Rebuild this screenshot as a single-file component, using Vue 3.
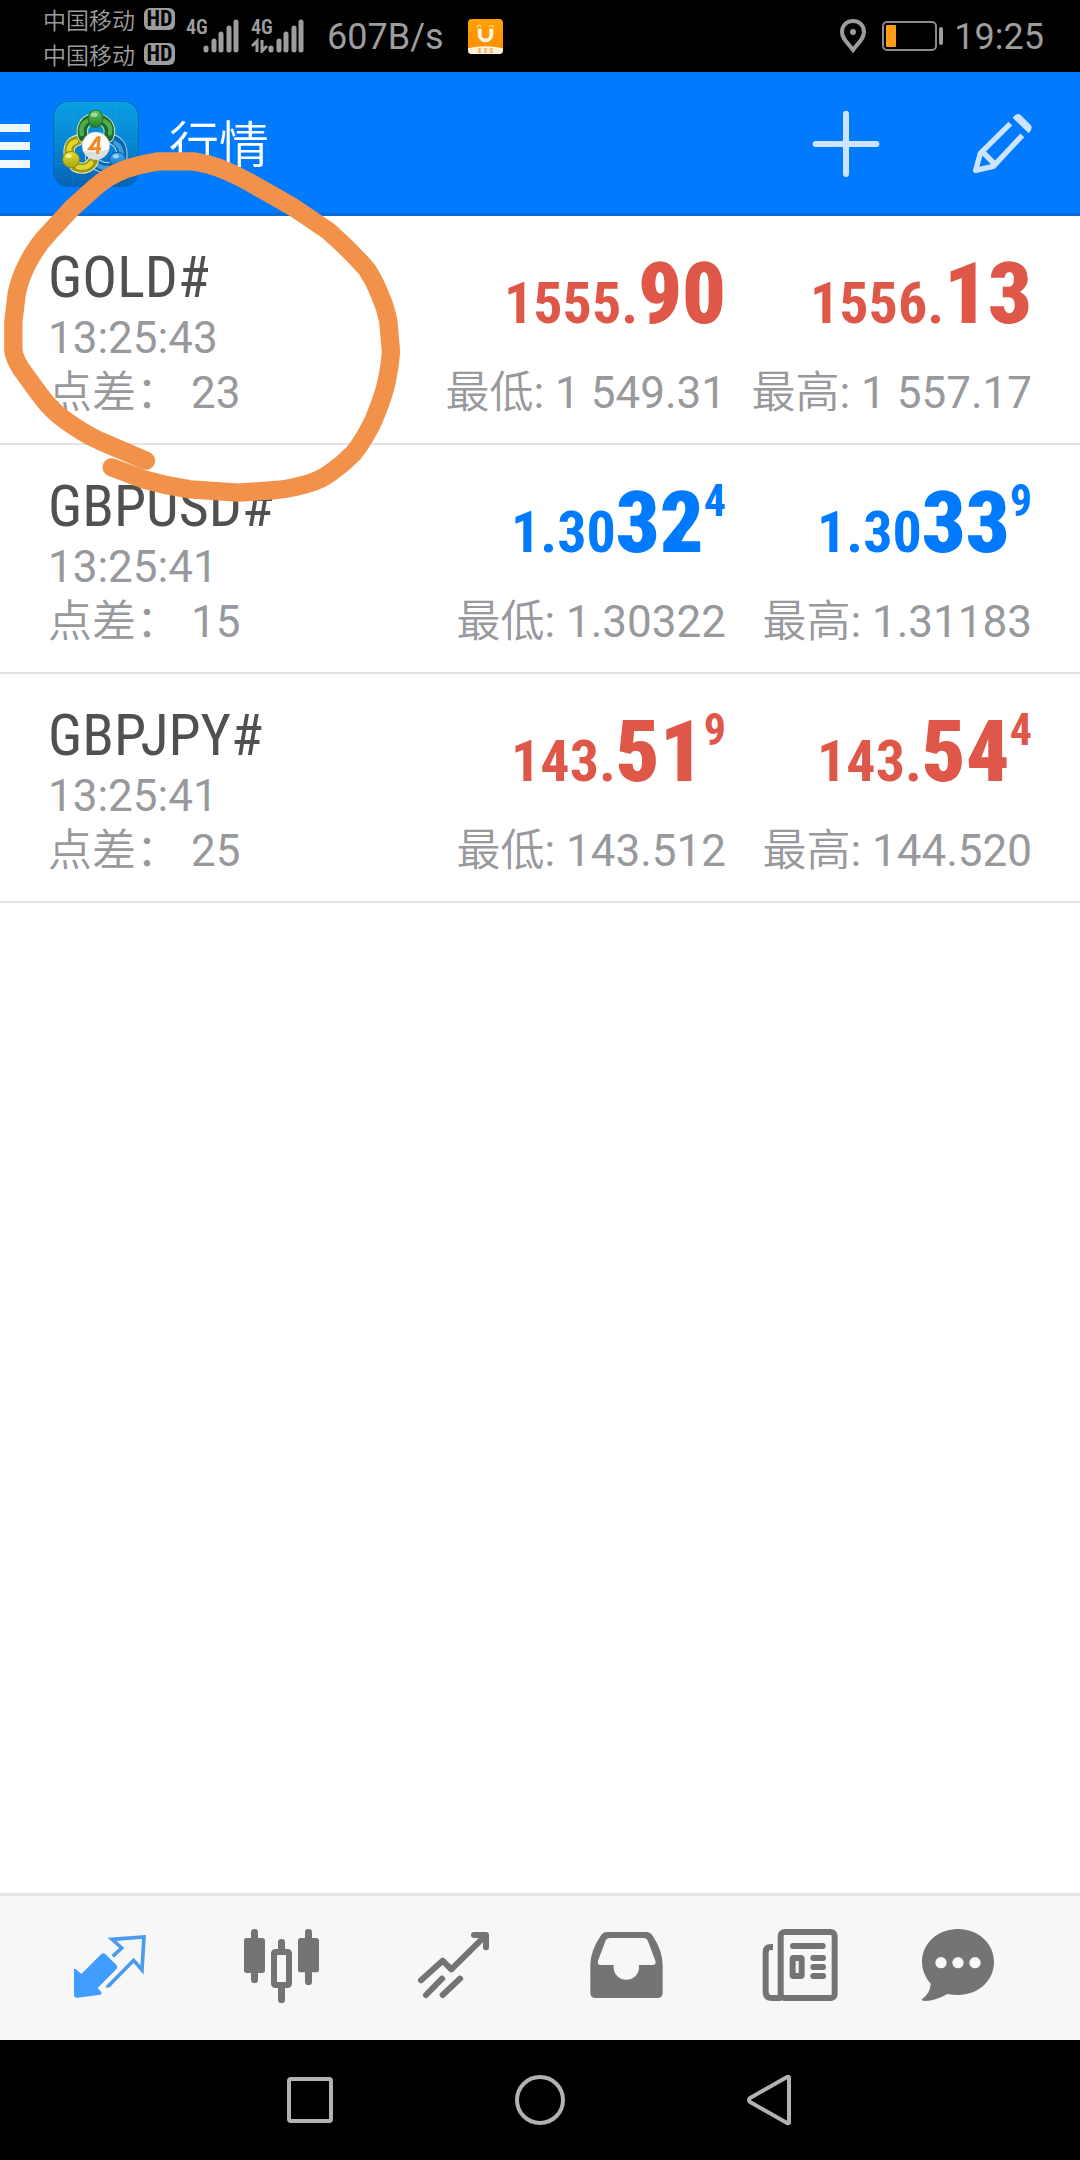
<script setup>
import { ref } from 'vue'

const quotes = [
  {
    symbol: 'GOLD#', time: '13:25:43', spread: '23', trend: 'down',
    bid: ['1555.', '90', ''], ask: ['1556.', '13', ''], low: '1 549.31', high: '1 557.17',
  },
  {
    symbol: 'GBPUSD#', time: '13:25:41', spread: '15', trend: 'up',
    bid: ['1.30', '32', '4'], ask: ['1.30', '33', '9'], low: '1.30322', high: '1.31183',
  },
  {
    symbol: 'GBPJPY#', time: '13:25:41', spread: '25', trend: 'down',
    bid: ['143.', '51', '9'], ask: ['143.', '54', '4'], low: '143.512', high: '144.520',
  },
]

const tabs = ['quotes', 'chart', 'trade', 'history', 'news', 'chat']
const active = ref('quotes')
</script>

<template>
  <div class="screen">
    <div class="status">
      <div class="carriers">
        <div class="carrier"><span>中国移动</span><b class="hd">HD</b></div>
        <div class="carrier"><span>中国移动</span><b class="hd">HD</b></div>
      </div>
      <div v-for="n in 2" :key="n" class="signal">
        <span class="net">4G</span>
        <svg viewBox="0 0 54 34" width="54" height="34" aria-hidden="true">
          <g stroke="#9d9d9d" stroke-width="5" stroke-linecap="round">
            <path d="M20 29v2M28 22v9M35 15v16M43 9v22M50 3v28" />
          </g>
          <path v-if="n === 2" d="M6 33V22L1 27M11 21v11l5-5" fill="none" stroke="#9d9d9d" stroke-width="3" />
        </svg>
      </div>
      <span class="speed">607B/s</span>
      <div class="shop">
        <svg viewBox="0 0 36 36" width="35" height="35" aria-hidden="true">
          <defs>
            <linearGradient id="shop" x1="0" y1="0" x2="0" y2="1">
              <stop offset="0" stop-color="#ffa200" /><stop offset="1" stop-color="#ff8a00" />
            </linearGradient>
          </defs>
          <rect width="36" height="36" rx="4" fill="url(#shop)" />
          <path d="M0 30q18-4 36 0v2q0 4-4 4H4q-4 0-4-4z" fill="#fff3dc" />
          <path d="M12 10v6a6 6 0 0 0 12 0v-6" fill="none" stroke="#fff8e6" stroke-width="4" />
          <path d="M9 8q3-3 5 0M22 8q2-3 5 0" fill="none" stroke="#fff8e6" stroke-width="1" />
          <path d="M10 31h4M10 34h4M12 30v5M16 31h4M16 34h4M18 30v4M22 31h4M22 34h4M24 30v5" stroke="#eda24a" stroke-width="1" />
        </svg>
      </div>
      <div class="right">
        <svg viewBox="0 0 26 34" width="26" height="34" aria-hidden="true">
          <path d="M13 2C7 2 2 6 2 13c0 7 6 11 11 18 5-7 11-11 11-18C24 6 19 2 13 2z" fill="none" stroke="#9d9d9d" stroke-width="4" />
          <circle cx="13" cy="13" r="3" fill="#9d9d9d" />
        </svg>
        <svg class="battery" viewBox="0 0 62 30" width="62" height="30" aria-hidden="true">
          <rect x="1" y="1" width="53" height="28" rx="4" fill="none" stroke="#8a8a8a" stroke-width="2" />
          <rect x="4" y="4" width="10" height="22" rx="1" fill="#ff9c1a" />
          <rect x="57" y="6" width="4" height="18" rx="2" fill="#9d9d9d" />
        </svg>
        <span class="clock">19:25</span>
      </div>
    </div>

    <header class="bar">
      <button class="menu" aria-label="菜单"><i></i><i></i><i></i></button>
      <svg class="logo" viewBox="160 93 257 257" width="86" height="86" aria-hidden="true">
        <defs>
          <linearGradient id="bg" x1="0" y1="0" x2="0" y2="1">
            <stop offset="0" stop-color="#0a9fe4" /><stop offset="0.5" stop-color="#0786d2" /><stop offset="1" stop-color="#0562b4" />
          </linearGradient>
          <linearGradient id="gr" x1="0" y1="0" x2="0" y2="1">
            <stop offset="0" stop-color="#6cc45c" /><stop offset="1" stop-color="#1f7d2e" />
          </linearGradient>
          <linearGradient id="ye" x1="0" y1="0" x2="0" y2="1">
            <stop offset="0" stop-color="#e6dc30" /><stop offset="1" stop-color="#a8a414" />
          </linearGradient>
          <linearGradient id="bl" x1="0" y1="0" x2="0" y2="1">
            <stop offset="0" stop-color="#4bb0ec" /><stop offset="1" stop-color="#0d6fc4" />
          </linearGradient>
        </defs>
        <rect x="161" y="94" width="255" height="255" rx="46" fill="url(#bg)" stroke="#0468bb" stroke-width="3" />
        <path d="M220 96v252M285 96v252M350 96v252M162 150h252M162 215h252M162 280h252" stroke="#2fa9e6" stroke-width="2" opacity="0.4" />
        <g fill="none" stroke-linecap="round">
          <path d="M362 282C370 250 366 222 342 210M272 262c14 26 40 34 66 30" stroke="#b5def5" stroke-width="34" />
          <path d="M362 282C370 250 366 222 342 210M272 262c14 26 40 34 66 30" stroke="#0f63ad" stroke-width="28" />
          <path d="M366 258c0-18-6-32-20-40M276 268c12 20 32 27 56 25" stroke="#3d9ddd" stroke-width="13" />
          <path d="M210 258c-6-26 2-42 24-48M226 288c22 12 44 4 54-16" stroke="#f3efb4" stroke-width="34" />
          <path d="M210 258c-6-26 2-42 24-48M226 288c22 12 44 4 54-16" stroke="#9c9717" stroke-width="28" />
          <path d="M208 246c-2-18 6-28 20-32M234 290c18 4 32 0 40-12" stroke="#e0d62f" stroke-width="14" />
          <path d="M250 200c-8-28 6-50 26-52M300 148c24 6 34 28 26 52" stroke="#cdeac4" stroke-width="34" />
          <path d="M250 200c-8-28 6-50 26-52M300 148c24 6 34 28 26 52" stroke="#1d6c2d" stroke-width="28" />
          <path d="M246 192c-4-20 4-34 18-40M312 152c16 8 22 22 18 38" stroke="#4fae49" stroke-width="13" />
        </g>
        <ellipse cx="287" cy="146" rx="22" ry="26" fill="url(#gr)" stroke="#1c6f2b" stroke-width="3" />
        <ellipse cx="214" cy="268" rx="25" ry="24" fill="url(#ye)" stroke="#8f8a12" stroke-width="3" />
        <ellipse cx="353" cy="268" rx="24" ry="22" fill="url(#bl)" stroke="#0b5ea8" stroke-width="3" />
        <ellipse cx="283" cy="134" rx="10" ry="7" fill="#c4ecb8" opacity="0.7" />
        <ellipse cx="207" cy="257" rx="9" ry="6" fill="#fffbc0" opacity="0.7" />
        <ellipse cx="348" cy="258" rx="9" ry="6" fill="#c9ebff" opacity="0.7" />
        <circle cx="288" cy="227" r="41" fill="#fdfdfd" stroke="#c8ccd0" stroke-width="2" />
        <path d="M250 242a41 41 0 0 0 78-6q-34 14-78 6z" fill="#dcdfe2" />
        <path d="M294 202l-24 34h34M298 198l-5 53" fill="none" stroke="#f08a24" stroke-width="9" />
      </svg>
      <h1>行情</h1>
      <button class="act" aria-label="添加">
        <svg viewBox="-6 288 288 288" width="96" height="96" aria-hidden="true">
          <path d="M138 341v181M47 432h182" stroke="#cce4ff" stroke-width="18" stroke-linecap="round" />
        </svg>
      </button>
      <button class="act" aria-label="编辑">
        <svg viewBox="465 288 288 288" width="96" height="96" fill="none" stroke="#cce4ff" stroke-width="16" aria-hidden="true">
          <path d="M631 371L541 460L527 511L580 499L667 406" stroke-linejoin="round" />
          <path d="M545 453L584 492" />
          <path d="M540 512l-13-1 3-18z" stroke-width="6" fill="#cce4ff" />
          <path d="M638 353q12-16 24-8l30 30q8 10-6 25z" fill="#cce4ff" stroke="none" />
        </svg>
      </button>
    </header>

    <main>
      <ul class="quotes">
        <li v-for="q in quotes" :key="q.symbol" class="quote">
          <div class="info">
            <h2>{{ q.symbol }}</h2>
            <p>{{ q.time }}</p>
            <p>点差： {{ q.spread }}</p>
          </div>
          <div class="side">
            <div class="price" :class="q.trend">
              <span>{{ q.bid[0] }}</span><b>{{ q.bid[1] }}</b><sup v-if="q.bid[2]">{{ q.bid[2] }}</sup>
            </div>
            <p>最低: {{ q.low }}</p>
          </div>
          <div class="side ask">
            <div class="price" :class="q.trend">
              <span>{{ q.ask[0] }}</span><b>{{ q.ask[1] }}</b><sup v-if="q.ask[2]">{{ q.ask[2] }}</sup>
            </div>
            <p>最高: {{ q.high }}</p>
          </div>
        </li>
      </ul>
    </main>

    <nav class="tabs">
      <button v-for="t in tabs" :key="t" :class="{ on: active === t }" :aria-label="t" @click="active = t">
        <svg v-if="t === 'quotes'" viewBox="96 120 288 288" width="96" height="96" aria-hidden="true">
          <path d="M132 268q2-4 6 0l16 14 60-60q6-5 12 0l34 34q4 5 0 10l-57 58 11 12q3 6-3 8l-68 9q-11 1-11-9z" fill="#419cff" />
          <path d="M248 229L275 204L246 178L342 171L336 270L311 241L236 317" fill="none" stroke="#4a9bee" stroke-width="11" />
          <path d="M226 321l8-10 12 4q-8 12-20 6z" fill="#4a9bee" />
        </svg>
        <svg v-else-if="t === 'chart'" viewBox="612 120 288 288" width="96" height="96" fill="#747474" aria-hidden="true">
          <rect x="642" y="174" width="63" height="105" rx="8" />
          <rect x="804" y="174" width="63" height="103" rx="8" />
          <rect x="663" y="147" width="21" height="162" rx="10" />
          <rect x="825" y="147" width="21" height="168" rx="10" />
          <rect x="744" y="177" width="21" height="40" rx="10" />
          <rect x="744" y="310" width="21" height="59" rx="10" />
          <rect x="732" y="216" width="45" height="99" rx="4" fill="none" stroke="#747474" stroke-width="18" />
        </svg>
        <svg v-else-if="t === 'trade'" viewBox="1128 120 288 288" width="96" height="96" fill="none" stroke="#747474" stroke-width="18" stroke-linecap="round" stroke-linejoin="round" aria-hidden="true">
          <path d="M1173 301L1238 242L1264 268L1367 166M1332 165h36v37" />
          <path d="M1188 345L1236 296M1238 345L1290 296" />
          <path d="M1225 298L1236 287L1247 298M1278 298L1290 287L1300 298" stroke-width="1" fill="#747474" />
        </svg>
        <svg v-else-if="t === 'history'" viewBox="84 120 288 288" width="96" height="96" aria-hidden="true">
          <path fill="#747474" fill-rule="evenodd" d="M172 156h116q14 0 21 13 29 46 29 86v83q0 16-16 16H137q-16 0-16-16v-83q0-40 30-86 7-13 21-13zM180 174q-10 0-14 10l-22 58q-3 13 8 13h39v8a38 36 0 0 0 76 0v-8h40q13 0 9-13l-22-58q-4-10-14-10z" />
        </svg>
        <svg v-else-if="t === 'news'" viewBox="600 120 288 288" width="96" height="96" fill="none" stroke="#747474" stroke-width="18" aria-hidden="true">
          <rect x="692" y="156" width="162" height="198" rx="12" />
          <path d="M669 201h-6q-16 0-16 16v118q0 19 19 19h28" />
          <rect x="728" y="234" width="27" height="54" rx="3" />
          <path d="M729 198h89M790 234h29M790 261h29M790 288h29" stroke-linecap="round" />
        </svg>
        <svg v-else viewBox="1116 120 288 288" width="96" height="96" aria-hidden="true">
          <path fill="#747474" d="M1224 147c60 0 108 42 108 99s-48 99-108 99q-16 0-32-3-34 20-67 21-12 0-8-7 24-16 25-45-26-30-26-65c0-57 48-99 108-99z" />
          <g fill="#f7f7f7"><circle cx="1173" cy="248" r="17" /><circle cx="1224" cy="248" r="17" /><circle cx="1275" cy="248" r="17" /></g>
        </svg>
      </button>
    </nav>

    <div class="system">
      <button aria-label="最近任务">
        <svg viewBox="0 0 52 52" width="52" height="52" aria-hidden="true"><rect x="5" y="5" width="42" height="42" rx="2" /></svg>
      </button>
      <button aria-label="主页">
        <svg viewBox="0 0 52 52" width="52" height="52" aria-hidden="true"><circle cx="26" cy="26" r="23" /></svg>
      </button>
      <button aria-label="返回">
        <svg viewBox="0 0 52 52" width="52" height="52" aria-hidden="true"><path d="M43 3L6 24q-2 2 0 4L43 49q2 1 2-1V4q0-2-2-1z" /></svg>
      </button>
    </div>

    <svg class="mark" viewBox="0 0 1260 1320" width="420" height="440" aria-hidden="true">
      <path
        d="M438 1172L300 1113Q250 1090 195 1050Q155 1022 120 975L62 895Q41 860 40 840V755L50 672Q60 625 78 590Q105 532 148 488L215 415L285 352Q325 317 375 298Q420 283 475 274H580Q620 280 655 293Q720 318 780 355L880 412Q930 445 985 483Q1045 535 1100 597Q1125 635 1140 675Q1158 715 1165 755L1173 845Q1168 905 1155 955Q1142 1000 1120 1052Q1092 1110 1062 1148Q1030 1180 1000 1202Q975 1222 945 1234Q890 1253 830 1260L715 1268L570 1258Q500 1248 430 1228Q380 1208 335 1192" />
    </svg>
  </div>
</template>

<style>
body {
  margin: 0;
}
</style>

<style scoped>
.screen {
  position: relative;
  display: flex;
  flex-direction: column;
  min-height: 100vh;
  background: #fff;
  font-family: Roboto, 'Noto Sans CJK SC DemiLight', 'Noto Sans CJK SC', sans-serif;
}
h1, h2, p, ul {
  margin: 0;
  padding: 0;
  font-weight: 400;
}
svg {
  display: block;
}
button {
  display: flex;
  align-items: center;
  justify-content: center;
  padding: 0;
  border: 0;
  background: none;
}

.status {
  display: flex;
  align-items: center;
  box-sizing: border-box;
  height: 72px;
  padding: 0 36px 0 43px;
  background: #000;
  color: #9d9d9d;
}
.carrier {
  display: flex;
  align-items: center;
  gap: 9px;
  height: 35px;
  font-size: 23px;
}
.hd {
  width: 31px;
  border-radius: 6px;
  background: #9d9d9d;
  color: #000;
  font-family: 'Roboto Condensed', sans-serif;
  font-size: 22px;
  line-height: 22px;
  text-align: center;
}
.signal {
  display: flex;
  flex-direction: column;
  position: relative;
  margin-left: 11px;
}
.net {
  position: absolute;
  top: -2px;
  left: 0;
  font-family: 'Roboto Condensed', sans-serif;
  font-weight: 600;
  font-size: 20px;
  line-height: 20px;
}
.speed {
  margin-left: 22px;
  padding-top: 2px;
  font-size: 36px;
}
.shop {
  margin-left: 24px;
}
.right {
  display: flex;
  align-items: center;
  gap: 10px;
  margin-left: auto;
  font-size: 36px;
}
.battery {
  margin-left: 6px;
}
.clock {
  padding-top: 2px;
}

.bar {
  display: flex;
  align-items: center;
  height: 144px;
  padding-right: 29px;
  background: #007aff;
  box-shadow: inset 0 -3px #0a6bd6;
}
.menu {
  flex-direction: column;
  gap: 10px;
  width: 30px;
  padding-top: 4px;
}
.menu i {
  width: 30px;
  height: 8px;
  background: #f0f8ff;
}
.logo {
  margin-left: 23px;
}
h1 {
  flex: 1;
  margin-left: 30px;
  padding-top: 4px;
  color: #fff;
  font-size: 50px;
  line-height: 60px;
}
.act + .act {
  margin-left: 61px;
}

main {
  flex: 1;
}
.quotes {
  list-style: none;
}
.quote {
  display: flex;
  padding: 27px 48px 22px;
  border-bottom: 2px solid #e3e3e3;
  color: #98999c;
  font-size: 44px;
  line-height: 55px;
}
h2 {
  color: #505050;
  font-family: 'Roboto Condensed', sans-serif;
  font-size: 58px;
  line-height: 68px;
}
.side {
  flex: 1;
  display: flex;
  flex-direction: column;
  align-items: flex-end;
  justify-content: flex-end;
  gap: 28px;
  white-space: nowrap;
}
.side.ask {
  flex: 0 0 306px;
}
.price {
  display: flex;
  align-items: baseline;
  font-family: 'Roboto Condensed', sans-serif;
  font-weight: 700;
  font-size: 58px;
  line-height: 58px;
}
.price b {
  font-size: 86px;
  line-height: 88px;
}
.price sup {
  align-self: flex-start;
  font-size: 44px;
  line-height: 44px;
}
.up {
  color: #007aff;
}
.down {
  color: #df5748;
}

.tabs {
  display: grid;
  grid-template-columns: repeat(6, 1fr);
  height: 144px;
  padding: 0 24px;
  border-top: 3px solid #e3e3e3;
  background: #f7f7f7;
}
.system {
  display: flex;
  align-items: center;
  justify-content: center;
  gap: 178px;
  height: 120px;
  background: #000;
}
.system svg {
  fill: none;
  stroke: #b2b2b2;
  stroke-width: 4;
}
.mark {
  position: absolute;
  top: 70px;
  left: 0;
  pointer-events: none;
}
.mark path {
  fill: none;
  stroke: #f2914a;
  stroke-width: 55;
  stroke-linecap: round;
  stroke-linejoin: round;
}
</style>
